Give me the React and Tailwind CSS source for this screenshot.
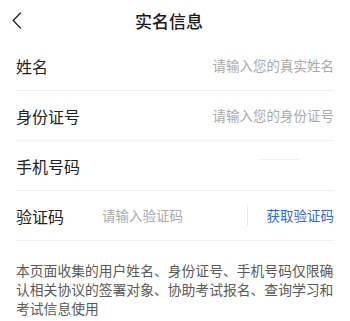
import { useState } from "react"

const font = { fontFamily: '"Noto Sans CJK SC", "Noto Sans", sans-serif' }

const Row = ({ label, children }) => (
  <div className="mx-4 h-[50px] flex items-center border-b border-[#efefef]">
    <div className="text-[16px] text-[#222] shrink-0">{label}</div>
    {children}
  </div>
)

export default function App() {
  const [name, setName] = useState("")
  const [idNo, setIdNo] = useState("")
  const [code, setCode] = useState("")

  return (
    <div className="w-[350px] h-[321px] bg-white overflow-hidden" style={font}>
      {/* header */}
      <div className="h-[41px] flex items-center">
        <div className="w-[40px] pl-[12px] flex items-center">
          <svg width="10" height="17" viewBox="0 0 10 17" fill="none">
            <path d="M8.5 1L1.2 8.5L8.5 16" stroke="#222" strokeWidth="1.3" strokeLinecap="round" strokeLinejoin="round" />
          </svg>
        </div>
        <div className="flex-1 text-center text-[17px] font-medium text-[#1a1a1a]">实名信息</div>
        <div className="w-[52px]" />
      </div>

      <Row label="姓名">
        <input
          value={name}
          onChange={(e) => setName(e.target.value)}
          placeholder="请输入您的真实姓名"
          className="flex-1 min-w-0 text-right text-[13.5px] text-[#222] placeholder:text-[#aaaaaa] outline-none bg-transparent"
        />
      </Row>

      <Row label="身份证号">
        <input
          value={idNo}
          onChange={(e) => setIdNo(e.target.value)}
          placeholder="请输入您的身份证号"
          className="flex-1 min-w-0 text-right text-[13.5px] text-[#222] placeholder:text-[#aaaaaa] outline-none bg-transparent"
        />
      </Row>

      <Row label="手机号码">
        <div className="flex-1 flex justify-end pr-[34px] -mt-[12px]">
          <div className="w-[42px] h-px bg-[#f2f2f2]" />
        </div>
      </Row>

      <Row label="验证码">
        <input
          value={code}
          onChange={(e) => setCode(e.target.value)}
          placeholder="请输入验证码"
          className="ml-[38px] flex-1 min-w-0 text-[13.5px] text-[#222] placeholder:text-[#aaaaaa] outline-none bg-transparent"
        />
        <div className="w-px h-[21px] bg-[#eaeaea] mr-[19px]" />
        <button className="text-[13.5px] text-[#2f6bd8]">获取验证码</button>
      </Row>

      <p className="px-4 pt-[20px] text-[13.8px] leading-[19px] text-[#5a5a5a]">
        本页面收集的用户姓名、身份证号、手机号码仅限确认相关协议的签署对象、协助考试报名、查询学习和考试信息使用
      </p>
    </div>
  )
}
